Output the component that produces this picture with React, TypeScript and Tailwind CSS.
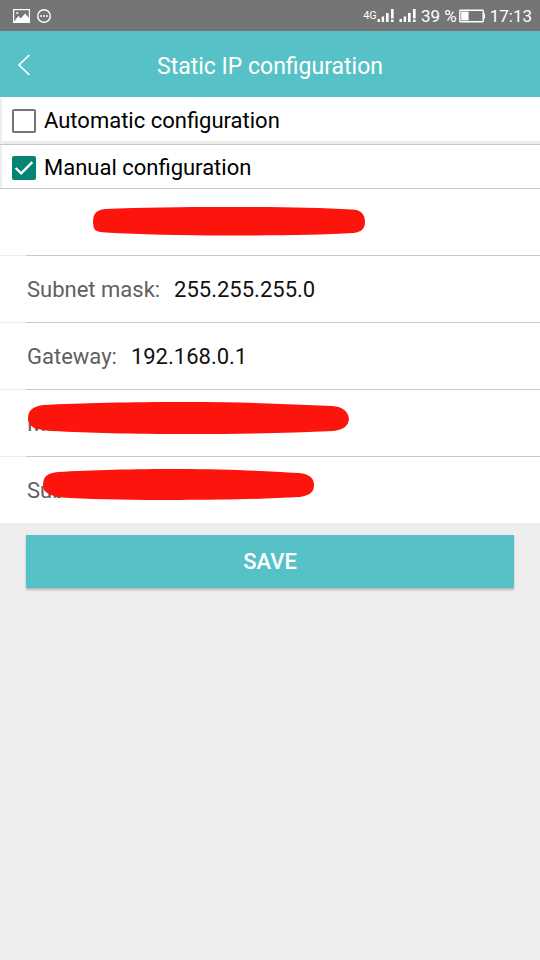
import { useState } from "react";

function SignalIcon() {
  return (
    <svg className="h-4 w-[18px]" viewBox="0 0 18 16" fill="white" aria-hidden="true">
      <rect x="0.5" y="11" width="2.4" height="3" />
      <rect x="4.7" y="8.5" width="2.4" height="5.5" />
      <rect x="9" y="5" width="2.6" height="9" />
      <rect x="14" y="1" width="2.6" height="9.4" />
      <rect x="14" y="11.6" width="2.6" height="2.4" />
    </svg>
  );
}

function StatusBar() {
  return (
    <div className="flex h-[31px] items-center bg-[#757575] pl-[13px] pr-2 text-white">
      <svg className="h-[14px] w-[17px]" viewBox="0 0 17 14" aria-hidden="true">
        <rect x="0.6" y="0.6" width="15.8" height="12.8" fill="none" stroke="white" strokeWidth="1.2" />
        <path d="M1 12.5 5.4 7l2.4 2.6L12 4.4 16 9v4.4H1Z" fill="white" />
        <circle cx="4.2" cy="4" r="1" fill="white" />
      </svg>
      <svg className="ml-[7px] h-[14px] w-[14px]" viewBox="0 0 14 14" aria-hidden="true">
        <circle cx="7" cy="7" r="6.3" fill="none" stroke="white" strokeWidth="1.4" />
        <g fill="white">
          <rect x="3.2" y="6.2" width="1.8" height="1.6" />
          <rect x="6.1" y="6.2" width="1.8" height="1.6" />
          <rect x="9" y="6.2" width="1.8" height="1.6" />
        </g>
      </svg>
      <div className="ml-auto flex items-center">
        <span className="text-[11px] leading-4">4G</span>
        <SignalIcon />
        <span className="w-1" />
        <SignalIcon />
        <span className="ml-1 text-[17px] leading-5">39 %</span>
        <svg className="ml-[2px] h-[14px] w-[27px]" viewBox="0 0 27 14" aria-hidden="true">
          <rect x="0.8" y="1.3" width="23.4" height="11.4" rx="0.6" fill="none" stroke="white" strokeWidth="1.4" />
          <rect x="2.2" y="2.6" width="7.4" height="8.8" fill="white" />
          <rect x="24.4" y="4.5" width="1.6" height="5" fill="white" />
        </svg>
        <span className="ml-1 text-[17px] leading-5">17:13</span>
      </div>
    </div>
  );
}

function Option({ label, checked, onChange }: { label: string; checked: boolean; onChange: () => void }) {
  return (
    <label className="flex h-[43px] items-center gap-2 border-l-2 border-[#eeeeee] bg-white pl-[10px] pt-[2px] text-[22px] leading-7 text-black">
      <span className="relative flex h-6 w-6">
        <input
          type="checkbox"
          checked={checked}
          onChange={onChange}
          className="h-6 w-6 appearance-none rounded-[2px] border-2 border-[#757575] checked:border-[#048472] checked:bg-[#048472]"
        />
        {checked && (
          <svg className="pointer-events-none absolute inset-0 h-6 w-6" viewBox="0 0 24 24" aria-hidden="true">
            <path d="m3.6 12 5.6 5.4L20.3 6.2" fill="none" stroke="white" strokeWidth="2.4" />
          </svg>
        )}
      </span>
      <span>{label}</span>
    </label>
  );
}

type FieldProps = {
  id: string;
  label?: string;
  value?: string;
  mark?: string;
};

function Field({ id, label, value = "", mark }: FieldProps) {
  return (
    <div className="relative bg-white">
      <div className="flex h-[66px] items-center gap-[14px] px-[27px] pt-[2px] text-[22px] leading-7">
        {label && (
          <label htmlFor={id} className="shrink-0 text-[#606060]">
            {label}
          </label>
        )}
        <input
          id={id}
          aria-label={label ? undefined : "IP address"}
          defaultValue={value}
          className="min-w-0 flex-1 bg-transparent text-[#111111] outline-none"
        />
      </div>
      {mark && (
        <svg className="pointer-events-none absolute left-0 top-0 h-[66px] w-[400px]" viewBox="0 0 400 66" aria-hidden="true">
          <path d={mark} fill="#fc140d" />
        </svg>
      )}
    </div>
  );
}

function Divider() {
  return (
    <div className="flex h-px">
      <span className="w-[26px] bg-[#eeeeee]" />
      <span className="flex-1 bg-[#c8c8c8]" />
    </div>
  );
}

export default function App() {
  const [manual, setManual] = useState(true);
  return (
    <div className="min-h-screen bg-[#eeeeee] font-[Roboto,sans-serif]">
      <StatusBar />
      <header className="grid h-[66px] grid-cols-[48px_1fr_48px] items-center bg-[#56c2c7] pt-[2px] text-white">
        <button type="button" aria-label="Back" className="flex h-full items-center pl-[17px]">
          <svg className="h-[22px] w-[14px]" viewBox="0 0 14 22" fill="none" stroke="white" strokeWidth="1.6" aria-hidden="true">
            <path d="M12.3 1.2 2 11l10.3 9.8" />
          </svg>
        </button>
        <h1 className="pt-1 text-center text-[23px] leading-7">Static IP configuration</h1>
      </header>
      <main>
        <div className="border-b border-[#eeeeee] bg-white pt-px">
          <Option label="Automatic configuration" checked={!manual} onChange={() => setManual(false)} />
        </div>
        <div className="mt-[2px] border-y border-[#c8c8c8]">
          <Option label="Manual configuration" checked={manual} onChange={() => setManual(true)} />
        </div>
        <Field
          id="ip"
          mark="M93 33C93 24 97 21 105 20 140 18.500 180 18 229 18 280 18 318 18.500 352 20.500 361 21 365 25 365 33 365 40 361 43 354 44 320 46 280 46.500 229 46.500 180 46.500 140 45.500 106 43.500Q98 43 95 41Q93 38 93 33Z"
        />
        <Divider />
        <Field id="mask" label="Subnet mask:" value="255.255.255.0" />
        <Divider />
        <Field id="gateway" label="Gateway:" value="192.168.0.1" />
        <Divider />
        <Field
          id="main-dns"
          label="Main DNS:"
          mark="M28 29C28 20 32 17 43 15 80 13 130 12 188 12 245 12 290 14 332 16 343 17 348 21 349 29 348 37 343 39 334 41 290 43 245 44 188 44 130 44 90 43 52 41 36 40 28 37 28 29Z"
        />
        <Divider />
        <Field
          id="sub-dns"
          label="Sub DNS:"
          mark="M43 28C43 19 48 16 58 15 90 13 135 12 179 12 225 12 262 14 299 16 309 17 314 21 314 28 314 36 309 38 300 40 262 42 225 43 179 43 135 43 100 42.500 70 41 50 40 43 36 43 28Z"
        />
        <div className="px-[26px] pt-3">
          <button
            type="button"
            className="h-[53px] w-full bg-[#56c2c7] text-[22px] font-medium leading-7 text-white shadow-[0_2px_2px_#b4bcb8]"
          >
            SAVE
          </button>
        </div>
      </main>
    </div>
  );
}
